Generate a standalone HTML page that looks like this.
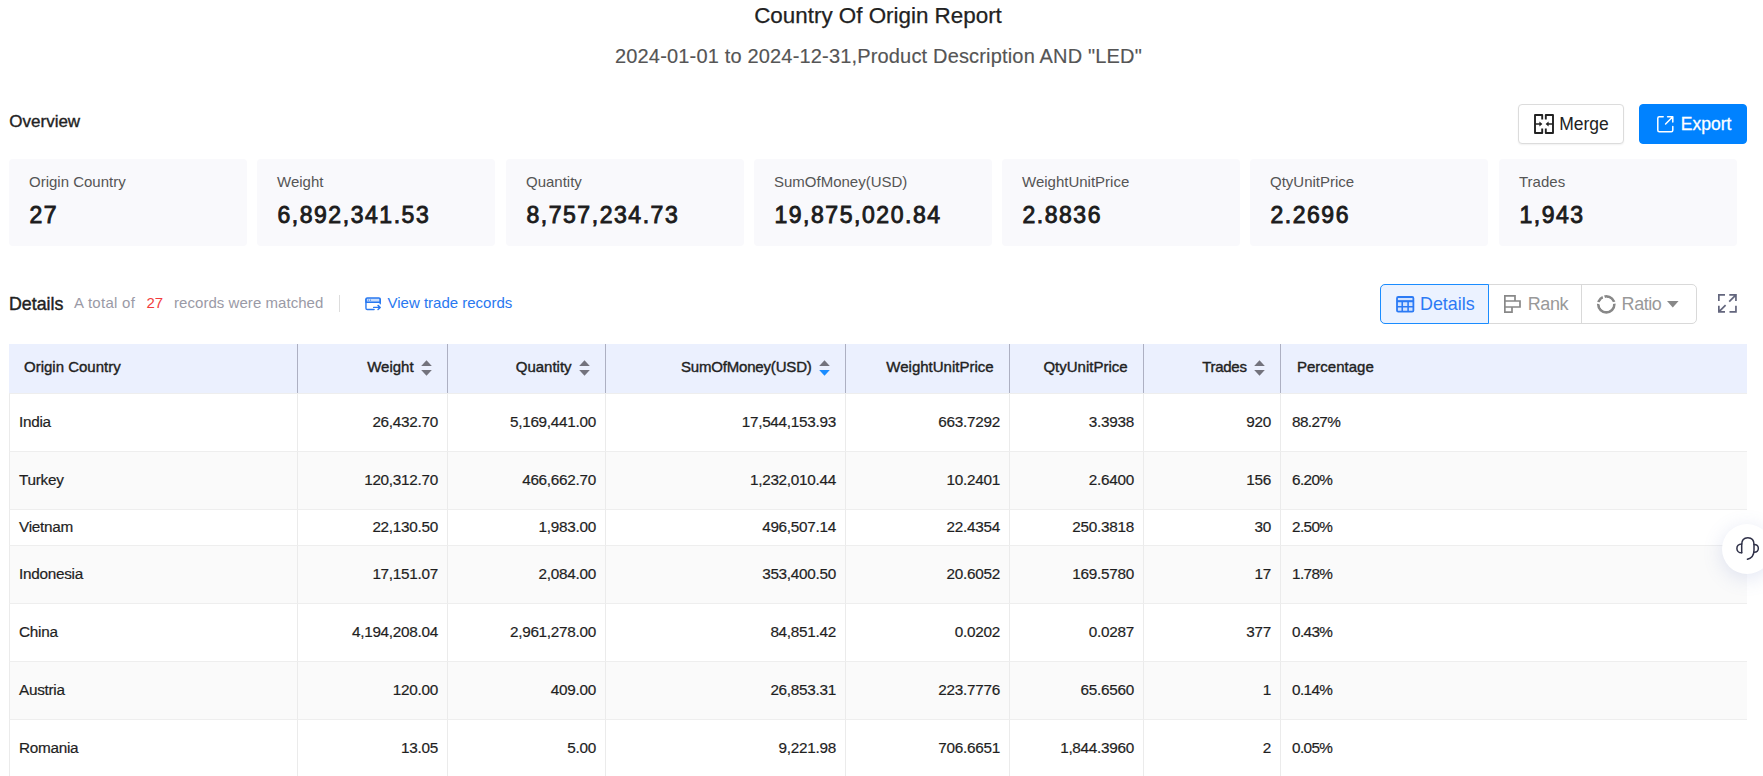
<!DOCTYPE html>
<html lang="en">
<head>
<meta charset="utf-8">
<title>Country Of Origin Report</title>
<style>
*{box-sizing:border-box;margin:0;padding:0}
html,body{width:1763px;height:776px;overflow:hidden;background:#fff}
body{font-family:"Liberation Sans",sans-serif;color:#1f1f1f;position:relative}
.abs{position:absolute;white-space:nowrap}
svg{position:absolute;overflow:visible}
#title{left:0;width:1756px;top:3px;-webkit-text-stroke:.25px #222;text-align:center;font-size:22.4px;line-height:26px;color:#222}
#sub{left:0;width:1757px;top:44px;-webkit-text-stroke:.15px #555;text-align:center;font-size:20px;line-height:24px;color:#555;letter-spacing:.17px}
#ov{left:9.3px;top:109.5px;font-size:17px;line-height:24px;color:#222;-webkit-text-stroke:.35px #222}
.btn{position:absolute;top:104px;height:40px;border-radius:4px;font-size:17.5px;line-height:38px;white-space:nowrap}
#merge{left:1518px;width:106px;border:1px solid #dcdcdc;background:#fff;color:#222;box-shadow:0 1px 2px rgba(0,0,0,.06)}
#export{left:1639px;width:108px;background:#0082ff;color:#fff;border:1px solid #0082ff}
.card{position:absolute;top:159px;width:238px;height:87px;background:#f9f9fc;border-radius:4px}
.card .l{position:absolute;left:20px;top:12.5px;font-size:15px;line-height:20px;color:#555;white-space:nowrap}
.card .v{position:absolute;left:20.4px;top:41px;font-size:23px;line-height:30px;font-weight:normal;-webkit-text-stroke:.9px #1c1c1c;color:#1c1c1c;letter-spacing:1.55px;white-space:nowrap}
#dt{left:9px;top:292px;font-size:17.8px;line-height:24px;color:#222;-webkit-text-stroke:.4px #222}
.g{font-size:15px;line-height:20px;color:#9a9aa6;top:293px}
#vt{left:387.5px;top:293px;font-size:15px;line-height:20px;color:#2878f0}
#dv{left:339px;top:295px;width:1px;height:17px;background:#ddd}
#tg{left:1380px;top:284px;height:40px;width:317px;border:1px solid #d9d9d9;border-radius:5px;background:#fff}
#tg .b{position:absolute;top:-1px;height:40px;font-size:18px;letter-spacing:-.45px;line-height:40px;color:#999;white-space:nowrap}
#tg .b1{left:-1px;width:109px;border:1px solid #1a8cff;background:#ebf2ff;border-radius:5px 0 0 5px;color:#2b7af5;font-size:17.9px;line-height:38px;letter-spacing:0}
#tg .sep{position:absolute;left:200px;top:-1px;width:1px;height:40px;background:#d9d9d9}
table{position:absolute;left:9px;top:344px;width:1738px;border-collapse:separate;border-spacing:0;table-layout:fixed;font-size:15.3px;letter-spacing:-.27px;color:#1f1f1f}
th{height:49px;background:#ebf0fe;border-right:1px solid #adb0c2;font-weight:normal;-webkit-text-stroke:.38px #222;font-size:15px;text-align:right;padding:0 15.4px 4px 0;white-space:nowrap;color:#222;vertical-align:middle;line-height:20px;letter-spacing:0}
th:first-child{text-align:left;padding-left:15px}
th:last-child{text-align:left;padding-left:16px;border-right:none}
td{height:58px;border-top:1px solid #eee;border-right:1px solid #ebebeb;text-align:right;padding:0 9px 2px 0;white-space:nowrap;vertical-align:middle;-webkit-text-stroke:.2px #1f1f1f}
td:first-child{text-align:left;padding-left:9px;border-left:1px solid #ebebeb}
td:last-child{text-align:left;padding-left:11px;border-right:none;letter-spacing:-.6px}
tr.s td{height:36px}
tr.e td{background:#fafafa}
.so{position:static;display:inline-block;width:11px;height:16px;vertical-align:-4px;margin-left:7px}
#fab{left:1722px;top:523.5px;width:50px;height:50px;border-radius:25px;background:#fff;box-shadow:0 4px 20px rgba(90,110,190,.18)}
</style>
</head>
<body>
<div class="abs" id="title">Country Of Origin Report</div>
<div class="abs" id="sub">2024-01-01 to 2024-12-31,Product Description AND "LED"</div>
<div class="abs" id="ov">Overview</div>
<div class="btn" id="merge">
<svg style="left:15px;top:9px" width="20" height="20" viewBox="0 0 20 20" fill="none" stroke="#222" stroke-width="1.9" stroke-linejoin="round"><path d="M8.2 5.6V1H1V19H8.2V14.4"/><path d="M11.8 5.6V1H19V19H11.8V14.4"/><path d="M1 10H6M19 10H14" stroke-width="1.6"/><path d="M8.4 10L5.4 7.6V12.4Z M11.6 10L14.6 7.6V12.4Z" fill="#222" stroke="none"/></svg>
<span style="position:absolute;left:40.2px">Merge</span></div>
<div class="btn" id="export">
<svg style="left:16.6px;top:10.8px" width="16.6" height="16.6" viewBox="0 0 16.6 16.6" fill="none" stroke="#fff" stroke-width="1.5" stroke-linecap="round" stroke-linejoin="round"><path d="M6.2 0.8H2.3Q0.8 0.8 0.8 2.3V14.3Q0.8 15.8 2.3 15.8H14.3Q15.8 15.8 15.8 14.3V10.4"/><path d="M10.6 0.8H15.8V6M15.8 0.8L8.6 8"/></svg>
<span style="position:absolute;left:40.8px;-webkit-text-stroke:.3px #fff">Export</span></div>
<div class="card" style="left:9px"><div class="l">Origin Country</div><div class="v">27</div></div>
<div class="card" style="left:257px"><div class="l">Weight</div><div class="v">6,892,341.53</div></div>
<div class="card" style="left:506px"><div class="l">Quantity</div><div class="v">8,757,234.73</div></div>
<div class="card" style="left:754px"><div class="l">SumOfMoney(USD)</div><div class="v">19,875,020.84</div></div>
<div class="card" style="left:1002px"><div class="l">WeightUnitPrice</div><div class="v">2.8836</div></div>
<div class="card" style="left:1250px"><div class="l">QtyUnitPrice</div><div class="v">2.2696</div></div>
<div class="card" style="left:1499px"><div class="l">Trades</div><div class="v">1,943</div></div>

<div class="abs" id="dt">Details</div>
<div class="abs g" style="left:74px;letter-spacing:.28px">A total of</div>
<div class="abs g" style="left:146.5px;color:#f23c3c">27</div>
<div class="abs g" style="left:174px;letter-spacing:.05px">records were matched</div>
<div class="abs" id="dv"></div>
<svg style="left:365.3px;top:296.6px" width="16.4" height="13.5" viewBox="0 0 17 14" preserveAspectRatio="none" fill="none" stroke="#2878f0" stroke-width="1.45" stroke-linecap="round" stroke-linejoin="round"><path d="M1 5.4H15.8V2.4Q15.8 1 14.4 1H2.4Q1 1 1 2.4Z" fill="#2878f0" fill-opacity=".25"/><path d="M9.4 13H2.4Q1 13 1 11.6V2.4M15.8 2.4V7"/><path d="M9 10.8H15.6M13.5 8.7L15.8 10.8L13.5 12.9"/><path d="M3.4 3.2H3.5M5.6 3.2H5.7" stroke-width="1.2"/></svg>
<div class="abs" id="vt">View trade records</div>
<div class="abs" id="tg">
 <div class="b b1">
  <svg style="left:14.7px;top:10.7px" width="18.4" height="16.7" viewBox="0 0 18.4 16.7" fill="none" stroke="#2b7af5"><rect x="1" y="1" width="16.4" height="14.7" rx="1.2" stroke-width="1.8" fill="#2b7af5" fill-opacity=".12"/><path d="M1 5.2H17.4" stroke-width="2.1"/><path d="M1 10.7H17.4M6.25 5.2V15.7M12.1 5.2V15.7" stroke-width="1.6"/></svg>
  <span style="position:absolute;left:39px">Details</span></div>
 <div class="b" style="left:108px;width:93px">
  <svg style="left:15.2px;top:11.1px" width="17" height="18" viewBox="0 0 17 18" fill="none" stroke="#888" stroke-width="1.7"><path d="M0.85 0.85H11V6H0.85ZM0.85 6H16V12H0.85ZM0.85 12H8V17.1H0.85Z"/></svg>
  <span style="position:absolute;left:38.8px">Rank</span></div>
 <div class="sep"></div>
 <div class="b" style="left:201px;width:115px">
  <svg style="left:14.6px;top:10.6px" width="18.6" height="18.6" viewBox="0 0 18.6 18.6" fill="none"><circle cx="9.3" cy="9.3" r="8" stroke="#888" stroke-width="2.7"/><path d="M9.3 9.3L5.6 -1M9.3 9.3L-1 7.6M9.3 9.3L19.6 7.4" stroke="#fff" stroke-width="1.9"/><circle cx="9.3" cy="9.3" r="6.6" fill="#fff"/></svg>
  <span style="position:absolute;left:39.6px">Ratio</span>
  <svg style="left:84.7px;top:16.8px" width="11.6" height="6.4" viewBox="0 0 11.6 6.4"><path d="M0 0H11.6L5.8 6.4Z" fill="#888"/></svg></div>
</div>
<svg style="left:1717.9px;top:293.8px" width="18.8" height="18.8" viewBox="0 0 18.8 18.8" fill="none" stroke="#63667d" stroke-width="1.7"><path d="M0.85 7V0.85H7M11.3 0.85H17.95V7M17.95 0.85L11.2 7.6M0.85 11.8V17.95H7M0.85 17.95L7.6 11.2M17.95 11.8V17.95H11.5"/></svg>
<table>
<colgroup><col style="width:289px"><col style="width:150px"><col style="width:158px"><col style="width:240px"><col style="width:164px"><col style="width:134px"><col style="width:137px"><col style="width:466px"></colgroup>
<thead><tr><th>Origin Country</th><th>Weight<svg class="so" viewBox="0 0 11 16"><path d="M5.5 0.2L10.8 6H0.2Z" fill="#73737d"/><path d="M5.5 15.8L10.8 10H0.2Z" fill="#73737d"/></svg></th><th>Quantity<svg class="so" viewBox="0 0 11 16"><path d="M5.5 0.2L10.8 6H0.2Z" fill="#73737d"/><path d="M5.5 15.8L10.8 10H0.2Z" fill="#73737d"/></svg></th><th style="letter-spacing:-.18px">SumOfMoney(USD)<svg class="so" viewBox="0 0 11 16"><path d="M5.5 0.2L10.8 6H0.2Z" fill="#73737d"/><path d="M5.5 15.8L10.8 10H0.2Z" fill="#1a8cff"/></svg></th><th>WeightUnitPrice</th><th>QtyUnitPrice</th><th style="letter-spacing:-.3px">Trades<svg class="so" viewBox="0 0 11 16"><path d="M5.5 0.2L10.8 6H0.2Z" fill="#73737d"/><path d="M5.5 15.8L10.8 10H0.2Z" fill="#73737d"/></svg></th><th>Percentage</th></tr></thead>
<tbody>
<tr class=""><td>India</td><td>26,432.70</td><td>5,169,441.00</td><td>17,544,153.93</td><td>663.7292</td><td>3.3938</td><td>920</td><td>88.27%</td></tr>
<tr class="e"><td>Turkey</td><td>120,312.70</td><td>466,662.70</td><td>1,232,010.44</td><td>10.2401</td><td>2.6400</td><td>156</td><td>6.20%</td></tr>
<tr class="s"><td>Vietnam</td><td>22,130.50</td><td>1,983.00</td><td>496,507.14</td><td>22.4354</td><td>250.3818</td><td>30</td><td>2.50%</td></tr>
<tr class="e"><td>Indonesia</td><td>17,151.07</td><td>2,084.00</td><td>353,400.50</td><td>20.6052</td><td>169.5780</td><td>17</td><td>1.78%</td></tr>
<tr class=""><td>China</td><td>4,194,208.04</td><td>2,961,278.00</td><td>84,851.42</td><td>0.0202</td><td>0.0287</td><td>377</td><td>0.43%</td></tr>
<tr class="e"><td>Austria</td><td>120.00</td><td>409.00</td><td>26,853.31</td><td>223.7776</td><td>65.6560</td><td>1</td><td>0.14%</td></tr>
<tr class=""><td>Romania</td><td>13.05</td><td>5.00</td><td>9,221.98</td><td>706.6651</td><td>1,844.3960</td><td>2</td><td>0.05%</td></tr>
</tbody></table>
<div class="abs" id="fab"></div>
<svg style="left:1730px;top:530px" width="34" height="34" viewBox="1730 530 34 34" fill="none" stroke="#2f3148" stroke-width="1.5" stroke-linecap="round"><path d="M1741.7 552.8V544.5C1741.7 540 1744.3 537.7 1747.85 537.7C1751.4 537.7 1754 540 1754 544.5V550C1754 555.5 1751.5 558.3 1747.4 559.2"/><path d="M1741.7 544C1735.3 544 1735.3 552.8 1741.7 552.8M1754 544.4C1759.8 544.4 1759.8 552.3 1754 552.3"/></svg>
</body>
</html>
